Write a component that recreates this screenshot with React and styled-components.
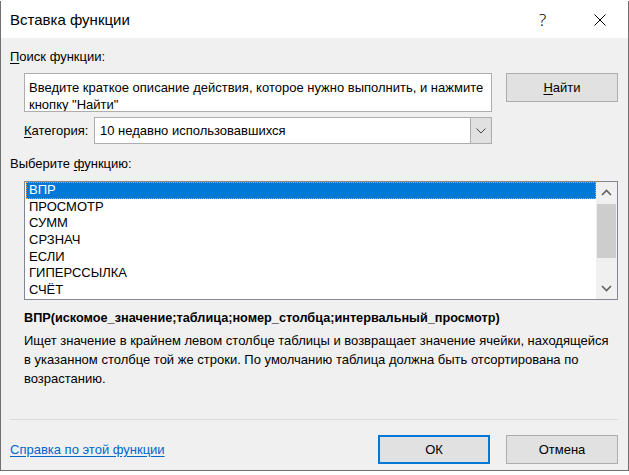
import React from 'react';
import styled, { createGlobalStyle } from 'styled-components';

const FUNCTIONS = ['ВПР', 'ПРОСМОТР', 'СУММ', 'СРЗНАЧ', 'ЕСЛИ', 'ГИПЕРССЫЛКА', 'СЧЁТ'];

const DESCRIPTION = [
  'Ищет значение в крайнем левом столбце таблицы и возвращает значение ячейки, находящейся',
  'в указанном столбце той же строки. По умолчанию таблица должна быть отсортирована по',
  'возрастанию.',
];

export default function App() {
  return (
    <>
      <GlobalStyle />
      <Dialog>
        <TitleBar>
          <Title>Вставка функции</Title>
          <TitleButton>?</TitleButton>
          <TitleButton>
            <svg width="12" height="12" viewBox="0 0 12 12">
              <path d="M0.5 0.5 L11.5 11.5 M11.5 0.5 L0.5 11.5" stroke="#000" strokeWidth="1" fill="none" />
            </svg>
          </TitleButton>
        </TitleBar>

        <Body>
          <Label>
            <u>П</u>оиск функции:
          </Label>
          <SearchRow>
            <SearchBox>
              Введите краткое описание действия, которое нужно выполнить, и нажмите
              <br />
              кнопку "Найти"
            </SearchBox>
            <Button $width={112} $height={29}>
              <u>Н</u>айти
            </Button>
          </SearchRow>

          <CategoryRow>
            <span>
              <u>К</u>атегория:
            </span>
            <Select>
              <SelectValue>10 недавно использовавшихся</SelectValue>
              <DropButton>
                <svg width="10" height="6" viewBox="0 0 10 6">
                  <path d="M0.5 0.5 L5 5 L9.5 0.5" stroke="#444" strokeWidth="1" fill="none" />
                </svg>
              </DropButton>
            </Select>
          </CategoryRow>

          <ListLabel>
            Выберите <u>ф</u>ункцию:
          </ListLabel>
          <ListBox>
            <Rows>
              {FUNCTIONS.map((name, i) => (
                <Row key={name} $selected={i === 0}>
                  {name}
                </Row>
              ))}
            </Rows>
            <ScrollBar>
              <ScrollArrow>
                <svg width="11" height="7" viewBox="0 0 11 7">
                  <path d="M1 6 L5.5 1.5 L10 6" stroke="#606060" strokeWidth="1.6" fill="none" />
                </svg>
              </ScrollArrow>
              <Track>
                <Thumb />
              </Track>
              <ScrollArrow>
                <svg width="11" height="7" viewBox="0 0 11 7">
                  <path d="M1 1 L5.5 5.5 L10 1" stroke="#606060" strokeWidth="1.6" fill="none" />
                </svg>
              </ScrollArrow>
            </ScrollBar>
          </ListBox>

          <Signature>ВПР(искомое_значение;таблица;номер_столбца;интервальный_просмотр)</Signature>
          <Description>
            {DESCRIPTION.map(line => (
              <div key={line}>{line}</div>
            ))}
          </Description>

          <Separator />
          <Footer>
            <HelpLink href="#">Справка по этой функции</HelpLink>
            <Buttons>
              <Button $width={112} $height={29} $default>
                ОК
              </Button>
              <Button $width={112} $height={29}>
                Отмена
              </Button>
            </Buttons>
          </Footer>
        </Body>
      </Dialog>
    </>
  );
}

const GlobalStyle = createGlobalStyle`
  html, body {
    margin: 0;
    padding: 0;
    background: #ffffff;
  }
  body {
    font-family: "Liberation Sans", Arial, sans-serif;
    font-size: 13px;
    color: #000;
  }
  u {
    text-decoration-thickness: 1px;
    text-underline-offset: 2px;
  }
`;

const Dialog = styled.div`
  display: flex;
  flex-direction: column;
  box-sizing: border-box;
  width: 629px;
  height: 470px;
  margin-top: 1px;
  border: 1px solid #707070;
  border-top: none;
`;

const TitleBar = styled.div`
  display: flex;
  align-items: center;
  height: 37px;
  padding-left: 9px;
  background: #ffffff;
`;

const Title = styled.div`
  flex: 1;
  font-size: 15px;
`;

const TitleButton = styled.div`
  display: flex;
  align-items: center;
  justify-content: center;
  width: 57px;
  height: 37px;
  font-family: "Noto Sans", sans-serif;
  font-size: 17px;
  font-weight: 300;
  color: #000;
`;

const Body = styled.div`
  flex: 1;
  display: flex;
  flex-direction: column;
  padding: 11px 10px 6px 9px;
  background: #f0f0f0;
`;

const Label = styled.div`
  line-height: 16px;
`;

const ListLabel = styled(Label)`
  margin-top: 12px;
`;

const SearchRow = styled.div`
  display: flex;
  align-items: flex-start;
  gap: 14px;
  margin: 8px 0 0 14px;
`;

const SearchBox = styled.div`
  box-sizing: border-box;
  width: 468px;
  height: 39px;
  padding: 5px 4px;
  overflow: hidden;
  line-height: 17px;
  white-space: nowrap;
  background: #ffffff;
  border: 1px solid #adadad;
`;

const Button = styled.div`
  display: flex;
  align-items: center;
  justify-content: center;
  box-sizing: border-box;
  width: ${({ $width }) => $width}px;
  height: ${({ $height }) => $height}px;
  background: #e1e1e1;
  border: ${({ $default }) => ($default ? '2px solid #0078d7' : '1px solid #adadad')};
`;

const CategoryRow = styled.div`
  display: flex;
  align-items: center;
  justify-content: space-between;
  width: 468px;
  height: 27px;
  margin: 5px 0 0 14px;
`;

const Select = styled.div`
  display: flex;
  box-sizing: border-box;
  width: 398px;
  height: 27px;
  background: #ffffff;
  border: 1px solid #adadad;
`;

const SelectValue = styled.div`
  flex: 1;
  padding-left: 5px;
  line-height: 25px;
`;

const DropButton = styled.div`
  display: flex;
  align-items: center;
  justify-content: center;
  box-sizing: border-box;
  width: 21px;
  background: #e1e1e1;
  border-left: 1px solid #adadad;
`;

const ListBox = styled.div`
  display: flex;
  box-sizing: border-box;
  width: 594px;
  height: 119px;
  margin: 9px 0 0 14px;
  overflow: hidden;
  background: #ffffff;
  border: 1px solid #828790;
`;

const Rows = styled.div`
  flex: 1;
  padding: 0 0 0 1px;
  overflow: hidden;
`;

const Row = styled.div`
  box-sizing: border-box;
  height: 16.7px;
  padding-left: ${({ $selected }) => ($selected ? 2 : 3)}px;
  line-height: ${({ $selected }) => ($selected ? 14.7 : 16.7)}px;
  white-space: nowrap;
  color: ${({ $selected }) => ($selected ? '#ffffff' : '#000000')};
  background: ${({ $selected }) => ($selected ? '#0078d7' : 'transparent')};
  border: ${({ $selected }) => ($selected ? '1px dotted #ff9a3c' : 'none')};
`;

const ScrollBar = styled.div`
  display: flex;
  flex-direction: column;
  width: 21px;
  background: #f0f0f0;
`;

const ScrollArrow = styled.div`
  display: flex;
  align-items: center;
  justify-content: center;
  height: 21px;
`;

const Track = styled.div`
  flex: 1;
  padding: 1px 1px 0;
`;

const Thumb = styled.div`
  height: 54px;
  background: #cdcdcd;
`;

const Signature = styled.div`
  margin: 10px 0 0 14px;
  font-size: 12.7px;
  font-weight: 700;
  line-height: 16px;
`;

const Description = styled.div`
  flex: 1;
  margin: 5px 0 0 14px;
  line-height: 19px;
  white-space: nowrap;
`;

const Separator = styled.div`
  height: 1px;
  background: #dadada;
`;

const Footer = styled.div`
  display: flex;
  align-items: center;
  margin-top: 15px;
`;

const HelpLink = styled.a`
  color: #0066cc;
  text-decoration: underline;
  text-underline-offset: 2px;
`;

const Buttons = styled.div`
  display: flex;
  gap: 16px;
  margin-left: auto;
`;
